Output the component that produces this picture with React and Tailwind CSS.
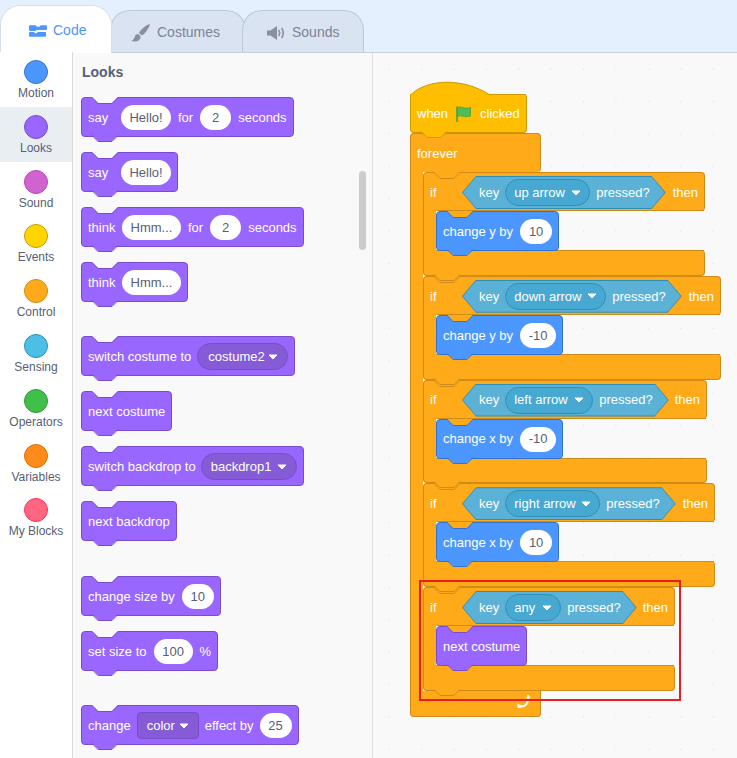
import React from 'react';

const styles = {
  looks: { bg: 'bg-[#9966ff] border-[#774dcb]', fill: '#9966ff', stroke: '#774dcb' },
  motion: { bg: 'bg-[#4c97ff] border-[#3373cc]', fill: '#4c97ff', stroke: '#3373cc' },
  control: { bg: 'bg-[#ffab19] border-[#cf8b17]', fill: '#ffab19', stroke: '#cf8b17' },
  events: { bg: 'bg-[#ffbf00] border-[#cc9900]', fill: '#ffbf00', stroke: '#cc9900' },
};

const categories = [
  ['Motion', 'bg-[#4c97ff] border-[#3373cc]'],
  ['Looks', 'bg-[#9966ff] border-[#774dcb]'],
  ['Sound', 'bg-[#cf63cf] border-[#bd42bd]'],
  ['Events', 'bg-[#ffd500] border-[#cc9900]'],
  ['Control', 'bg-[#ffab19] border-[#cf8b17]'],
  ['Sensing', 'bg-[#4cbfe6] border-[#2e8eb8]'],
  ['Operators', 'bg-[#40bf4a] border-[#389438]'],
  ['Variables', 'bg-[#ff8c1a] border-[#db6e00]'],
  ['My Blocks', 'bg-[#ff6680] border-[#ff3355]'],
];

function NotchTop({ fill, stroke }) {
  return (
    <svg className="absolute -top-px left-[9px]" width="29" height="8">
      <path d="M1 0 L7 6 H21 L27 0 Z" fill={fill} />
      <path d="M1 0.5 L7 6.5 H21 L27 0.5" fill="none" stroke={stroke} />
    </svg>
  );
}

function Bump({ fill, stroke }) {
  return (
    <svg className="absolute top-full left-[9px] z-10 -mt-px" width="29" height="8">
      <path d="M1 0 L7 6 H21 L27 0 Z" fill={fill} />
      <path d="M1 0.5 L7 6.5 H21 L27 0.5" fill="none" stroke={stroke} />
    </svg>
  );
}

function Input({ w, children }) {
  return (
    <span className={`flex h-[25px] items-center justify-center rounded-full bg-white text-[#575e75] ${w}`}>
      {children}
    </span>
  );
}

function Caret() {
  return (
    <svg width="10" height="6" viewBox="0 0 10 6">
      <path d="M1 1 H9 L5 5 Z" fill="#fff" stroke="#fff" strokeLinejoin="round" />
    </svg>
  );
}

function Menu({ w, children }) {
  return (
    <span className={`flex h-[27px] items-center justify-between rounded-full border border-[#774dcb] bg-[#855cd6] pr-[9px] ${w}`}>
      {children}
      <Caret />
    </span>
  );
}

function Block({ kind = 'looks', notch = '#f9f9f9', gap = 'gap-[7px]', children }) {
  const s = styles[kind];
  return (
    <div className={`relative flex h-10 w-fit items-center rounded border px-[6px] pt-px text-white ${s.bg} ${gap}`}>
      <NotchTop fill={notch} stroke={s.stroke} />
      <Bump fill={s.fill} stroke={s.stroke} />
      {children}
    </div>
  );
}

function KeyPressed({ name, w }) {
  return (
    <div className="h-[33px] bg-[#2e8eb8] [clip-path:polygon(14px_0,calc(100%_-_14px)_0,100%_50%,calc(100%_-_14px)_100%,14px_100%,0_50%)]">
      <div className="m-px flex h-[31px] items-center gap-[6px] bg-[#5cb1d6] pl-[16px] pr-[15px] [clip-path:polygon(13px_0,calc(100%_-_13px)_0,100%_50%,calc(100%_-_13px)_100%,13px_100%,0_50%)]">
        <span>key</span>
        <span className={`flex h-[27px] items-center justify-between rounded-full border border-[#2e8eb8] bg-[#47a8d1] px-[8px] ${w}`}>
          {name}
          <Caret />
        </span>
        <span>pressed?</span>
      </div>
    </div>
  );
}

function IfBlock({ width, name, nameW, children }) {
  return (
    <div className={`relative flex flex-col ${width}`}>
      <div className="relative flex h-[39px] items-center rounded-t rounded-br border border-b-0 border-[#cf8b17] bg-[#ffab19] pl-[6px] pr-[6px] pt-px text-white">
        <NotchTop fill="#ffab19" stroke="#cf8b17" />
        <span className="w-[32px]">if</span>
        <KeyPressed name={name} w={nameW} />
        <span className="ml-auto">then</span>
        <div className="absolute bottom-0 left-[13px] right-0 h-px bg-[#cf8b17]" />
      </div>
      <div className="relative z-[1] flex h-[39px]">
        <div className="w-[13px] border-l border-[#cf8b17] bg-[#ffab19]" />
        {children}
      </div>
      <div className="relative h-[25.75px] rounded-b rounded-tr border border-t-0 border-[#cf8b17] bg-[#ffab19]">
        <div className="absolute left-[12px] right-0 top-0 h-px bg-[#cf8b17]" />
        <Bump fill="#ffab19" stroke="#cf8b17" />
      </div>
    </div>
  );
}

function Flag() {
  return (
    <svg width="17" height="18" viewBox="0 0 17 18">
      <path d="M2 1.5 V17" stroke="#45993d" strokeWidth="1.5" />
      <path d="M2.5 2.5 C6 0.5 8 4.5 15.5 2.5 V11 C9 13 6 9.5 2.5 11.5 Z" fill="#4cbf56" stroke="#45993d" strokeWidth="0.7" />
    </svg>
  );
}

function Tabs() {
  return (
    <div className="relative flex h-[53px] items-end border-b border-[#c5cfdf] bg-[#e5f0ff] text-[14px]">
      <div className="z-10 -mb-px flex h-[48px] w-[112px] items-center gap-[6px] rounded-t-[20px] border border-b-0 border-[#d5dfee] bg-white pl-[28px] pt-[2px] text-[#4c97ff]">
        <svg width="18" height="14" viewBox="0 0 19 14">
          <path d="M0 2 Q0 1 1 1 H7 L8.5 2.5 H11 L12.5 1 H18 Q19 1 19 2 V5 Q19 6 18 6 H8 L7 7 H1.5 Q0 7 0 6 Z" fill="#4c97ff" />
          <path d="M0 9 Q0 8 1 8 H5 L6.5 9.5 H8 L9.5 8 H17 Q18 8 18 9 V12 Q18 13 17 13 H1 Q0 13 0 12 Z" fill="#4c97ff" />
        </svg>
        <span>Code</span>
      </div>
      <div className="-ml-[2px] flex h-[42px] w-[136px] items-center gap-[6px] rounded-t-[20px] border border-b-0 border-[#bcc7d8] bg-[#d9e3f2] pl-[20px] pt-[2px] text-[#7d8494]">
        <svg width="20" height="20" viewBox="0 0 20 20">
          <path d="M19 1 C15 2 10 6 8 10 L11 12.5 C15 10 18 5 19 1 Z M7 11 C4 11 4 14 3 15.5 C2 17 1 17 0.5 17.5 C3 19 8 19 9.5 15 C10 13.5 9 12 7 11 Z" fill="#8a8f9b" />
        </svg>
        <span>Costumes</span>
      </div>
      <div className="-ml-[4px] flex h-[42px] w-[122px] items-center gap-[6px] rounded-t-[20px] border border-b-0 border-[#bcc7d8] bg-[#d9e3f2] pl-[24px] pt-[2px] text-[#7d8494]">
        <svg width="19" height="16" viewBox="0 0 19 16">
          <path d="M0 5.5 H3.5 L10 1 V15 L3.5 10.5 H0 Z" fill="#8a8f9b" />
          <path d="M12 5.5 Q13.5 8 12 10.5 M15 3.5 Q17.5 8 15 12.5" fill="none" stroke="#8a8f9b" strokeWidth="1.6" strokeLinecap="round" />
        </svg>
        <span>Sounds</span>
      </div>
    </div>
  );
}

function Sidebar() {
  return (
    <div className="relative z-20 -mt-px w-[73px] shrink-0 border-r border-[#d9d9d9] bg-white">
      {categories.map(([name, color]) => (
        <div
          key={name}
          className={`flex h-[54.8px] flex-col items-center pt-[8px] text-[12px] text-[#575e75] ${name === 'Looks' ? 'bg-[#e9eef2]' : ''}`}
        >
          <div className={`h-[24px] w-[24px] rounded-full border ${color}`} />
          <span>{name}</span>
        </div>
      ))}
    </div>
  );
}

function Palette() {
  return (
    <div className="relative w-[300px] shrink-0 overflow-hidden border-r border-[#dddddd] bg-[#f9f9f9] pl-[8px] text-[13px]">
      <h2 className="mt-[9px] h-[35px] pl-[1px] text-[14px] font-bold leading-[20px] text-[#575e75]">Looks</h2>
      <div className="flex flex-col gap-[15px]">
        <Block>
          <span className="w-[26px]">say</span>
          <Input w="w-[50px]">Hello!</Input>
          <span>for</span>
          <Input w="w-[31px]">2</Input>
          <span>seconds</span>
        </Block>
        <Block>
          <span className="w-[26px]">say</span>
          <Input w="w-[50px]">Hello!</Input>
        </Block>
        <Block>
          <span className="w-[27px]">think</span>
          <Input w="w-[59px]">Hmm...</Input>
          <span>for</span>
          <Input w="w-[31px]">2</Input>
          <span>seconds</span>
        </Block>
        <Block>
          <span className="w-[27px]">think</span>
          <Input w="w-[59px]">Hmm...</Input>
        </Block>
        <div className="mt-[19px]">
          <Block gap="gap-[6px]">
            <span>switch costume to</span>
            <Menu w="w-[91px] pl-[10px]">costume2</Menu>
          </Block>
        </div>
        <Block>
          <span>next costume</span>
        </Block>
        <Block gap="gap-[5px]">
          <span>switch backdrop to</span>
          <Menu w="w-[96px] pl-[9px]">backdrop1</Menu>
        </Block>
        <Block>
          <span>next backdrop</span>
        </Block>
        <div className="mt-[20px]">
          <Block>
            <span>change size by</span>
            <Input w="w-[32px]">10</Input>
          </Block>
        </div>
        <Block>
          <span>set size to</span>
          <Input w="w-[39px]">100</Input>
          <span>%</span>
        </Block>
        <div className="mt-[19px]">
          <Block gap="gap-[6px]">
            <span>change</span>
            <span className="flex h-[27px] w-[62px] items-center justify-between rounded border border-[#774dcb] bg-[#855cd6] px-[9px]">
              color
              <Caret />
            </span>
            <span>effect by</span>
            <Input w="w-[32px]">25</Input>
          </Block>
        </div>
      </div>
      <div className="absolute right-[6px] top-[118px] h-[79px] w-[7px] rounded-full bg-[#cccccc]" />
    </div>
  );
}

function Script() {
  return (
    <div className="flex w-fit flex-col text-[13px]">
      <div className="relative z-[2] flex h-[39px] w-[117px] items-center gap-[7px] rounded-b rounded-tr border border-t-0 border-[#cc9900] bg-[#ffbf00] px-[6px] pt-[2px] text-white">
        <svg className="absolute -left-px -top-[13px]" width="82" height="16">
          <path d="M0.5 14 C18 -3 54 -3 80 14 V16 H0.5 Z" fill="#ffbf00" />
          <path d="M0.5 14 C18 -3 54 -3 80 14" fill="none" stroke="#cc9900" />
        </svg>
        <div className="absolute left-[78px] right-0 top-0 h-px bg-[#cc9900]" />
        <span>when</span>
        <Flag />
        <span className="ml-px">clicked</span>
        <Bump fill="#ffbf00" stroke="#cc9900" />
      </div>
      <div className="relative flex h-[39px] w-[131px] items-center rounded-t rounded-br border border-b-0 border-[#cf8b17] bg-[#ffab19] px-[6px] pt-[2px] text-white">
        <span>forever</span>
      </div>
      <div className="flex">
        <div className="w-[13px] shrink-0 border-l border-[#cf8b17] bg-[#ffab19]" />
        <div className="flex flex-col">
          <IfBlock width="w-[282px]" name="up arrow" nameW="w-[85px]">
            <Block kind="motion" notch="#ffab19">
              <span>change y by</span>
              <Input w="w-[32px]">10</Input>
            </Block>
          </IfBlock>
          <IfBlock width="w-[298px]" name="down arrow" nameW="w-[101px]">
            <Block kind="motion" notch="#ffab19">
              <span>change y by</span>
              <Input w="w-[36px]">-10</Input>
            </Block>
          </IfBlock>
          <IfBlock width="w-[284px]" name="left arrow" nameW="w-[88px]">
            <Block kind="motion" notch="#ffab19">
              <span>change x by</span>
              <Input w="w-[36px]">-10</Input>
            </Block>
          </IfBlock>
          <IfBlock width="w-[292px]" name="right arrow" nameW="w-[95px]">
            <Block kind="motion" notch="#ffab19">
              <span>change x by</span>
              <Input w="w-[32px]">10</Input>
            </Block>
          </IfBlock>
          <IfBlock width="w-[252px]" name="any" nameW="w-[56px]">
            <Block notch="#ffab19">
              <span>next costume</span>
            </Block>
          </IfBlock>
        </div>
      </div>
      <div className="relative h-[26px] w-[131px] rounded-b border border-t-0 border-[#cf8b17] bg-[#ffab19]">
        <svg className="absolute bottom-[6px] right-[7px]" width="16" height="15" viewBox="0 0 16 15">
          <path d="M11 1 C11.5 5 10.5 10 7 11 C5 11.5 3 11 1.5 10" fill="none" stroke="#fff" strokeWidth="2" strokeLinecap="round" />
          <path d="M9 3 H14 L11.5 0 Z" fill="#fff" />
          <path d="M0.5 8 L5 13 H0.5 Z" fill="#fff" />
        </svg>
      </div>
    </div>
  );
}

export default function App() {
  return (
    <div className="flex h-[758px] w-[737px] flex-col overflow-hidden font-['Liberation_Sans',Arial,sans-serif]">
      <Tabs />
      <div className="flex min-h-0 flex-1">
        <Sidebar />
        <Palette />
        <div className="relative flex-1 overflow-hidden bg-[#f9f9f9] bg-[radial-gradient(circle,#dddddd_0.7px,transparent_1px)] bg-[size:32.4px_32.4px] pl-[37px] pt-[41px]">
          <Script />
          <div className="absolute left-[46px] top-[527px] z-30 h-[121px] w-[262px] border-2 border-[#ed1c24]" />
        </div>
      </div>
    </div>
  );
}
